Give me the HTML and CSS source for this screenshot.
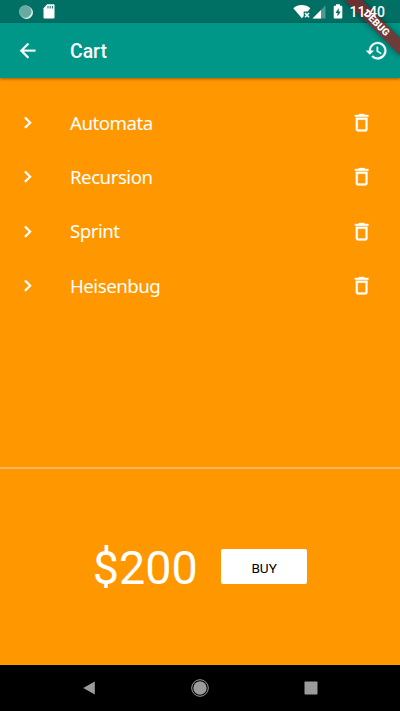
FILE: index.html
```html
<!DOCTYPE html>
<html lang="en">
<head>
<meta charset="utf-8">
<title>Cart</title>
<link rel="stylesheet" href="styles.css">
</head>
<body>
<svg class="defs" width="0" height="0">
  <symbol id="chevron" viewBox="0 0 24 24"><path d="M10 6 8.59 7.41 13.17 12l-4.58 4.59L10 18l6-6z"/></symbol>
  <symbol id="trash" viewBox="0 0 24 24"><path d="M6 19c0 1.1.9 2 2 2h8c1.1 0 2-.9 2-2V7H6v12zM8 9h8v10H8V9zm7.5-5-1-1h-5l-1 1H5v2h14V4z"/></symbol>
</svg>
<div class="screen">
  <div class="status">
    <svg class="sync" viewBox="0 0 16 16"><circle cx="8.5" cy="8.5" r="6.5" fill="#e3f2ef"/><circle cx="7.3" cy="7.6" r="6.3" fill="#66aaa1"/><circle cx="7.3" cy="7.6" r="5.9" fill="none" stroke="#96c6c0" stroke-width=".8" stroke-dasharray="1 1"/></svg>
    <svg class="sd" viewBox="0 0 12 15"><path fill="#fff" d="M4.2 .3H10.600Q11.500 .3 11.500 1.300V13.500Q11.500 14.500 10.500 14.500H1.500Q.5 14.500 .5 13.500V4.200z"/><path stroke="#006f64" stroke-width="1" d="M5 2v2.500M7.200 2v2.500M9.400 2v2.500"/></svg>
    <span class="grow"></span>
    <svg class="wifi" viewBox="0 0 18 15"><path fill="#fff" d="M.3 4.200C5-.1 12.800-.1 17.300 4.200L14.700 7.500H10.700V12.200L8.900 14.300z"/><path d="m12 9 4 4.200m0-4.200-4 4.200" fill="none" stroke="#fff" stroke-width="1.600"/></svg>
    <svg class="signal" viewBox="0 0 14 14"><path fill="#4d9a92" d="M13.500 .5v13H.5z"/><path fill="#fff" d="M9 5v8.500H.5z"/></svg>
    <svg class="battery" viewBox="0 0 10 15"><path fill="#fff" d="M3 .3h4v1.500h1.300q1 0 1 1v10.700q0 1-1 1H1.700q-1 0-1-1V2.800q0-1 1-1H3z"/><path fill="#006f64" d="M5.700 4 2.500 9h2v3.600L7.700 7.500h-2z"/></svg>
    <span class="clock">11:40</span>
  </div>
  <header class="bar">
    <svg class="icon" viewBox="0 0 24 24"><path d="M20 11H7.830l5.590-5.590L12 4l-8 8 8 8 1.410-1.410L7.830 13H20z"/></svg>
    <h1>Cart</h1>
    <svg class="icon" viewBox="0 0 24 24"><path d="M13 3a9 9 0 0 0-9 9H1l3.890 3.890.070.140L9 12H6a7 7 0 1 1 2.060 4.940l-1.420 1.420A9 9 0 1 0 13 3zm-1 5v5l4.280 2.540.720-1.210-3.500-2.080V8z"/></svg>
  </header>
  <ul class="items">
    <li><svg class="icon"><use href="#chevron"/></svg><span>Automata</span><svg class="icon"><use href="#trash"/></svg></li>
    <li><svg class="icon"><use href="#chevron"/></svg><span>Recursion</span><svg class="icon"><use href="#trash"/></svg></li>
    <li><svg class="icon"><use href="#chevron"/></svg><span>Sprint</span><svg class="icon"><use href="#trash"/></svg></li>
    <li><svg class="icon"><use href="#chevron"/></svg><span>Heisenbug</span><svg class="icon"><use href="#trash"/></svg></li>
  </ul>
  <section class="total">
    <span class="price">$200</span>
    <button class="buy">BUY</button>
  </section>
  <nav class="nav">
    <svg viewBox="0 0 20 20"><path d="M3.200 10 14.800 3.600v12.800z"/></svg>
    <svg viewBox="0 0 20 20"><circle cx="10" cy="10" r="6.700"/><circle class="ring" cx="10" cy="10" r="8.300"/></svg>
    <svg viewBox="0 0 20 20"><rect x="3.500" y="3.500" width="13" height="13" rx=".8"/></svg>
  </nav>
  <div class="debug">DEBUG</div>
</div>
</body>
</html>
```
FILE: styles.css
```css
* { box-sizing: border-box; }
body { margin: 0; }
.defs { position: absolute; }
.screen {
  position: relative;
  display: flex;
  flex-direction: column;
  width: 400px;
  height: 711px;
  overflow: hidden;
  background: #ff9800;
  color: #fff;
  font-family: Roboto, sans-serif;
}
.status {
  flex: none;
  display: flex;
  align-items: center;
  height: 23.3px;
  padding: 0 15px 0 17.500px;
  background: #006f64;
}
.sync { width: 16px; height: 16px; }
.sd { width: 12px; height: 15px; margin-left: 9.500px; }
.grow { flex: 1; }
.wifi { width: 18px; height: 15px; margin-right: 1px; }
.signal { width: 14px; height: 14px; margin-right: 7px; }
.battery { width: 10px; height: 15px; margin-right: 6.500px; }
.clock {
  position: relative;
  z-index: 2;
  padding-top: 2px;
  font-size: 14px;
  font-weight: 500;
  line-height: 23px;
}
.icon {
  flex: none;
  width: 23.3px;
  height: 23.3px;
  fill: #fff;
  stroke: #fff;
  stroke-width: .3;
}
.bar {
  flex: none;
  display: flex;
  align-items: center;
  height: 54.400px;
  padding: 0 11.700px 0 15.600px;
  background: #009688;
  box-shadow: 0 1px 3px rgba(0, 0, 0, .4);
}
.bar h1 {
  flex: 1;
  margin: 0 0 0 31.100px;
  padding-top: 2px;
  font-size: 19.400px;
  font-weight: 500;
}
.items {
  flex: 1;
  margin: 0;
  padding: 17.700px 27px 0 15.600px;
  list-style: none;
}
.items li {
  display: flex;
  align-items: center;
  height: 54.400px;
}
.items span {
  flex: 1;
  margin-left: 31.100px;
  font: 18.700px/24px "Noto Sans", sans-serif;
  letter-spacing: -.5px;
}
.total {
  flex: none;
  display: flex;
  align-items: center;
  justify-content: center;
  gap: 23.300px;
  height: 197.500px;
  border-top: 2px solid #ffb561;
}
.price { padding-top: 2px; font-size: 46.700px; line-height: 56px; }
.buy {
  width: 86px;
  height: 35px;
  padding: 2px 0 0;
  border: 0;
  border-radius: 2px;
  background: #fff;
  color: #000;
  font: 13.600px Roboto, sans-serif;
}
.nav {
  flex: none;
  display: flex;
  align-items: center;
  justify-content: center;
  gap: 90.500px;
  height: 46.500px;
  background: #000;
}
.nav svg { width: 20px; height: 20px; fill: #9b9b9b; }
.nav .ring { fill: none; stroke: #9b9b9b; stroke-width: 1; }
.debug {
  position: absolute;
  z-index: 1;
  left: 361.100px;
  top: 27.200px;
  width: 77.800px;
  height: 11.700px;
  transform: rotate(45deg);
  transform-origin: 38.900px -27.200px;
  background: rgba(145, 28, 32, .75);
  box-shadow: 0 0 6px rgba(0, 0, 0, .45);
  font-size: 9.900px;
  font-weight: 900;
  line-height: 11.700px;
  text-align: center;
}
```
